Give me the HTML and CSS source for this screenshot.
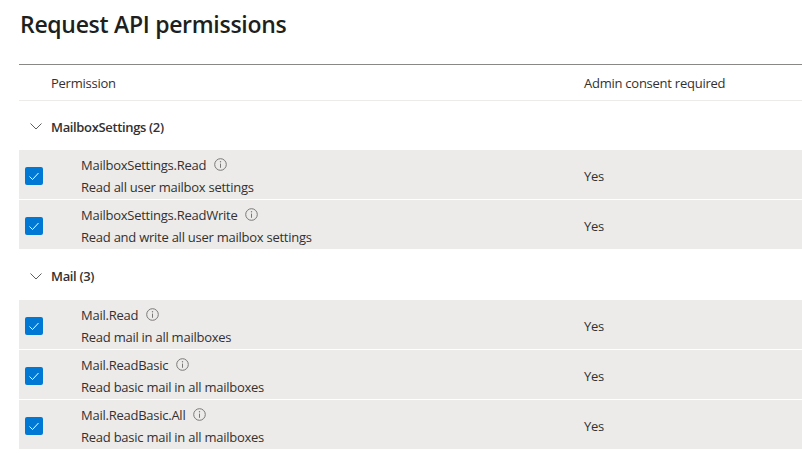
FILE: index.html
```html
<!DOCTYPE html>
<html>
<head>
<meta charset="utf-8">
<link rel="stylesheet" href="styles.css">
</head>
<body>
<div class="page">
  <h1 class="title">Request API permissions</h1>
  <div class="table">
    <div class="head">
      <div class="col-perm">Permission</div>
      <div class="col-admin">Admin consent required</div>
    </div>

    <div class="group">
      <svg class="chev" width="12" height="7" viewBox="0 0 12 7"><polyline points="0.5,0.5 6,6 11.5,0.5" fill="none" stroke="#605e5c" stroke-width="1"/></svg>
      <span class="group-name">MailboxSettings (2)</span>
    </div>
    <div class="row">
      <div class="cell-check"><span class="check"><svg width="18" height="18" viewBox="0 0 18 18"><polyline points="4.5,9.5 7.5,12.5 13.5,6" fill="none" stroke="#fff" stroke-width="1"/></svg></span></div>
      <div class="cell-perm">
        <div class="name">MailboxSettings.Read <svg class="info" width="13" height="13" viewBox="0 0 13 13"><circle cx="6.5" cy="6.5" r="5.8" fill="none" stroke="#797775" stroke-width="1"/><line x1="6.5" y1="5.6" x2="6.5" y2="9.8" stroke="#797775" stroke-width="1"/><circle cx="6.5" cy="3.8" r="0.7" fill="#797775"/></svg></div>
        <div class="desc">Read all user mailbox settings</div>
      </div>
      <div class="cell-admin">Yes</div>
    </div>
    <div class="row">
      <div class="cell-check"><span class="check"><svg width="18" height="18" viewBox="0 0 18 18"><polyline points="4.5,9.5 7.5,12.5 13.5,6" fill="none" stroke="#fff" stroke-width="1"/></svg></span></div>
      <div class="cell-perm">
        <div class="name">MailboxSettings.ReadWrite <svg class="info" width="13" height="13" viewBox="0 0 13 13"><circle cx="6.5" cy="6.5" r="5.8" fill="none" stroke="#797775" stroke-width="1"/><line x1="6.5" y1="5.6" x2="6.5" y2="9.8" stroke="#797775" stroke-width="1"/><circle cx="6.5" cy="3.8" r="0.7" fill="#797775"/></svg></div>
        <div class="desc">Read and write all user mailbox settings</div>
      </div>
      <div class="cell-admin">Yes</div>
    </div>

    <div class="group">
      <svg class="chev" width="12" height="7" viewBox="0 0 12 7"><polyline points="0.5,0.5 6,6 11.5,0.5" fill="none" stroke="#605e5c" stroke-width="1"/></svg>
      <span class="group-name">Mail (3)</span>
    </div>
    <div class="row">
      <div class="cell-check"><span class="check"><svg width="18" height="18" viewBox="0 0 18 18"><polyline points="4.5,9.5 7.5,12.5 13.5,6" fill="none" stroke="#fff" stroke-width="1"/></svg></span></div>
      <div class="cell-perm">
        <div class="name">Mail.Read <svg class="info" width="13" height="13" viewBox="0 0 13 13"><circle cx="6.5" cy="6.5" r="5.8" fill="none" stroke="#797775" stroke-width="1"/><line x1="6.5" y1="5.6" x2="6.5" y2="9.8" stroke="#797775" stroke-width="1"/><circle cx="6.5" cy="3.8" r="0.7" fill="#797775"/></svg></div>
        <div class="desc">Read mail in all mailboxes</div>
      </div>
      <div class="cell-admin">Yes</div>
    </div>
    <div class="row">
      <div class="cell-check"><span class="check"><svg width="18" height="18" viewBox="0 0 18 18"><polyline points="4.5,9.5 7.5,12.5 13.5,6" fill="none" stroke="#fff" stroke-width="1"/></svg></span></div>
      <div class="cell-perm">
        <div class="name">Mail.ReadBasic <svg class="info" width="13" height="13" viewBox="0 0 13 13"><circle cx="6.5" cy="6.5" r="5.8" fill="none" stroke="#797775" stroke-width="1"/><line x1="6.5" y1="5.6" x2="6.5" y2="9.8" stroke="#797775" stroke-width="1"/><circle cx="6.5" cy="3.8" r="0.7" fill="#797775"/></svg></div>
        <div class="desc">Read basic mail in all mailboxes</div>
      </div>
      <div class="cell-admin">Yes</div>
    </div>
    <div class="row">
      <div class="cell-check"><span class="check"><svg width="18" height="18" viewBox="0 0 18 18"><polyline points="4.5,9.5 7.5,12.5 13.5,6" fill="none" stroke="#fff" stroke-width="1"/></svg></span></div>
      <div class="cell-perm">
        <div class="name">Mail.ReadBasic.All <svg class="info" width="13" height="13" viewBox="0 0 13 13"><circle cx="6.5" cy="6.5" r="5.8" fill="none" stroke="#797775" stroke-width="1"/><line x1="6.5" y1="5.6" x2="6.5" y2="9.8" stroke="#797775" stroke-width="1"/><circle cx="6.5" cy="3.8" r="0.7" fill="#797775"/></svg></div>
        <div class="desc">Read basic mail in all mailboxes</div>
      </div>
      <div class="cell-admin">Yes</div>
    </div>
  </div>
</div>
</body>
</html>
```

FILE: styles.css
```css
html, body {
  margin: 0;
  padding: 0;
  background: #ffffff;
  overflow: hidden;
}
body {
  font-family: "Open Sans", "Noto Sans", sans-serif;
  font-size: 13px;
  letter-spacing: -0.25px;
  color: #323130;
}
.page {
  padding-left: 19px;
}
.title {
  margin: 0;
  padding: 8px 0 0 1px;
  height: 64px;
  box-sizing: border-box;
  font-size: 23px;
  font-weight: 600;
  line-height: 32px;
  letter-spacing: -0.3px;
  color: #201f1e;
}
.table {
  border-top: 1px solid #8a8886;
}
.head {
  display: flex;
  align-items: center;
  height: 35px;
  border-bottom: 1px solid #edebe9;
}
.col-perm {
  width: 533px;
  padding-left: 32px;
  font-weight: 500;
}
.col-admin {
  flex: 1;
}
.group {
  display: flex;
  align-items: center;
  height: 49px;
  padding-left: 11px;
  padding-top: 2px;
  box-sizing: border-box;
}
.chev {
  display: block;
  margin-right: 9px;
}
.group-name {
  font-weight: 600;
  letter-spacing: -0.35px;
}
.row {
  display: flex;
  align-items: center;
  height: 49px;
  background: #edebe9;
  border-bottom: 1px solid #ffffff;
}
.row + .group {
  height: 50px;
}
.cell-check {
  width: 62px;
  padding-left: 6px;
  box-sizing: border-box;
  display: flex;
  align-items: center;
  padding-top: 3px;
}
.check {
  display: block;
  width: 18px;
  height: 18px;
  border-radius: 2px;
  background: #0078d4;
}
.check svg {
  display: block;
}
.cell-perm {
  width: 503px;
  display: flex;
  flex-direction: column;
  gap: 2px;
  padding-top: 2px;
}
.name, .desc {
  line-height: 20px;
  white-space: nowrap;
}
.name {
  display: flex;
  align-items: center;
}
.info {
  display: block;
  margin-left: 8px;
}
.cell-admin {
  flex: 1;
  padding-top: 3px;
}
```
